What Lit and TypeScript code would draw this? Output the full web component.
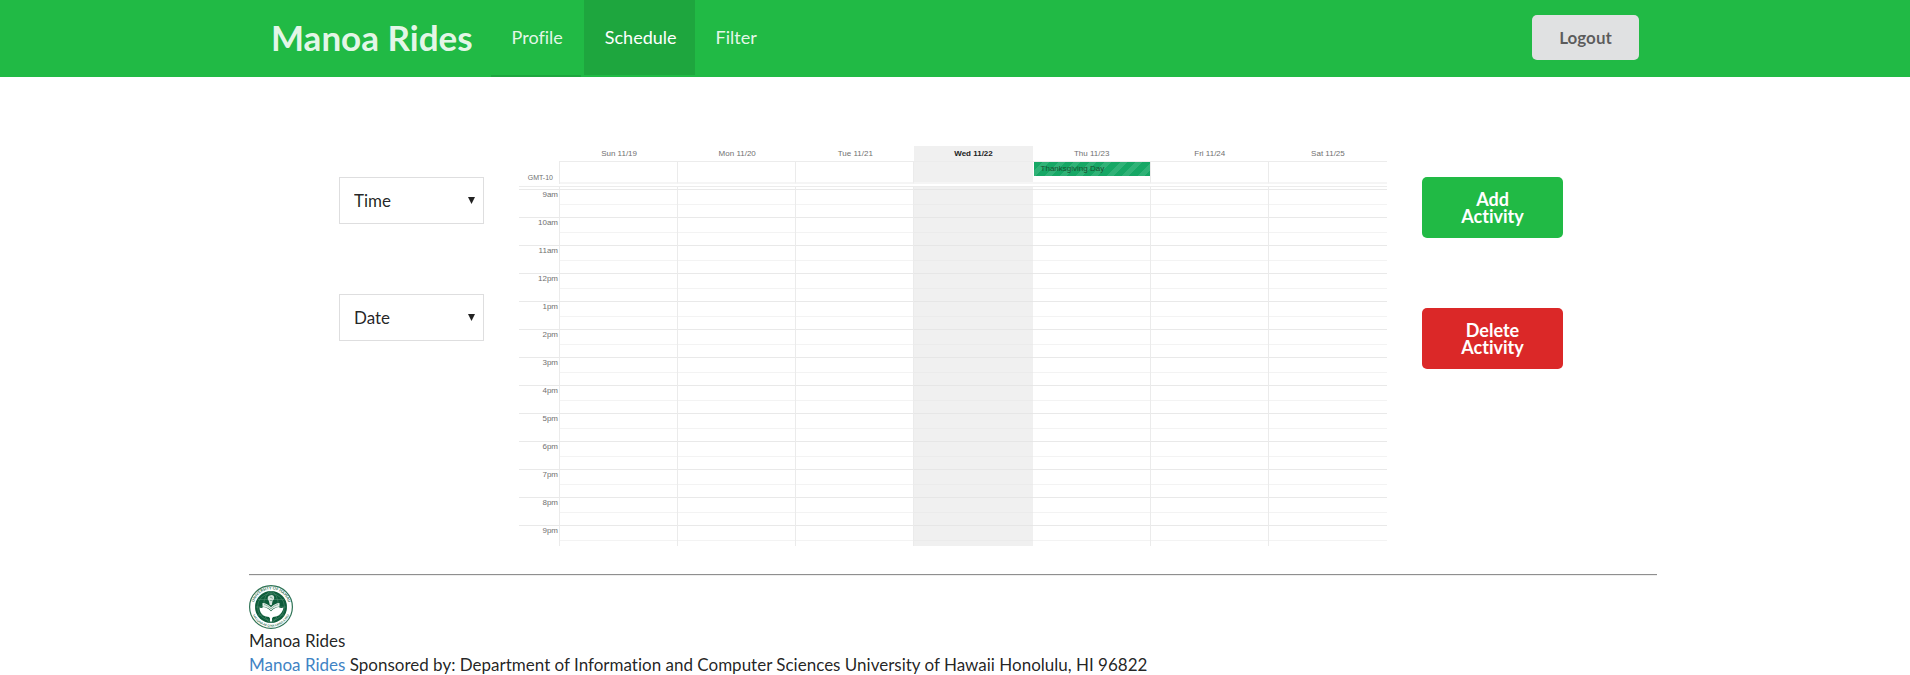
import { LitElement, html, css, svg } from "lit";
import { customElement, property } from "lit/decorators.js";
import { classMap } from "lit/directives/class-map.js";

const DAYS = ["Sun 11/19", "Mon 11/20", "Tue 11/21", "Wed 11/22", "Thu 11/23", "Fri 11/24", "Sat 11/25"];
const HOURS = ["9am", "10am", "11am", "12pm", "1pm", "2pm", "3pm", "4pm", "5pm", "6pm", "7pm", "8pm", "9pm"];
const TODAY = 3;
const HOLIDAY = 4;

@customElement("week-calendar")
class WeekCalendar extends LitElement {
  static styles = css`
    :host {
      display: block;
      font-family: "Liberation Sans", Arial, sans-serif;
      font-size: 8px;
      line-height: 10px;
      color: #707070;
    }
    table {
      width: 100%;
      table-layout: fixed;
      border-collapse: separate;
      border-spacing: 0;
    }
    th,
    td {
      box-sizing: border-box;
      padding: 0;
      font-weight: normal;
    }
    .gutter {
      width: 41px;
    }
    .days th {
      height: 15px;
      padding-top: 1px;
    }
    .today {
      background-color: #f0f0f0;
    }
    .days .today {
      color: #222;
      font-weight: bold;
    }
    .allday > * {
      height: 23px;
      border-bottom: 2px solid #f5f5f5;
      vertical-align: top;
    }
    .allday td {
      border-top: 1px solid #ececec;
    }
    .allday .zone {
      padding: 0 6px 1px 0;
      border-bottom: 0;
      font-size: 7px;
      text-align: right;
      vertical-align: bottom;
    }
    .line {
      border-right: 1px solid #ebebeb;
    }
    .space td {
      height: 2px;
    }
    .strip td {
      height: 3px;
      border-top: 1px solid #ececec;
    }
    .hour > * {
      height: 28px;
      border-top: 1px solid #e9e9e9;
      vertical-align: top;
    }
    .hour td {
      background-image: linear-gradient(#f3f3f3, #f3f3f3);
      background-size: 100% 1px;
      background-position: 0 14px;
      background-repeat: no-repeat;
    }
    .hour .today {
      background-image: linear-gradient(#ebebeb, #ebebeb);
      border-top-color: #e6e6e6;
    }
    .hour th {
      padding: 0 1px 0 0;
      text-align: right;
    }
    .hour:last-child > * {
      height: 21px;
    }
    .event {
      height: 14px;
      margin-left: 1px;
      padding-left: 7px;
      box-sizing: border-box;
      line-height: 14px;
      color: #17502f;
      background: repeating-linear-gradient(135deg, #16a765 0 6px, #30b277 6px 11px);
    }
  `;

  private cellClass(i: number) {
    return classMap({ today: i === TODAY, line: i !== TODAY && i !== DAYS.length - 1 });
  }

  render() {
    return html`
      <table aria-label="Week schedule">
        <thead>
          <tr class="days">
            <td class="gutter"></td>
            ${DAYS.map((d, i) => html`<th scope="col" class=${classMap({ today: i === TODAY })}>${d}</th>`)}
          </tr>
        </thead>
        <tbody>
          <tr class="allday">
            <th scope="row" class="zone line">GMT-10</th>
            ${DAYS.map(
              (_, i) => html`<td class=${this.cellClass(i)}>
                ${i === HOLIDAY ? html`<div class="event">Thanksgiving Day</div>` : ""}
              </td>`
            )}
          </tr>
          <tr class="space"><td colspan="8"></td></tr>
          <tr class="strip">
            <td class="line"></td>
            ${DAYS.map((_, i) => html`<td class=${this.cellClass(i)}></td>`)}
          </tr>
          ${HOURS.map(
            (h) => html`<tr class="hour">
              <th scope="row" class="line">${h}</th>
              ${DAYS.map((_, i) => html`<td class=${this.cellClass(i)}></td>`)}
            </tr>`
          )}
        </tbody>
      </table>
    `;
  }
}

@customElement("drop-down")
class DropDown extends LitElement {
  @property() label = "";
  @property({ type: Array }) options: string[] = [];

  static styles = css`
    :host {
      display: grid;
      align-items: center;
    }
    select,
    svg {
      grid-area: 1 / 1;
    }
    select {
      appearance: none;
      width: 100%;
      height: 47px;
      padding: 0 32px 0 14px;
      border: 1px solid #dededf;
      border-radius: 0;
      background: #fff;
      color: rgba(0, 0, 0, 0.87);
      font: inherit;
    }
    svg {
      justify-self: end;
      width: 7px;
      height: 7px;
      margin-right: 9px;
      pointer-events: none;
    }
  `;

  render() {
    return html`
      <select aria-label=${this.label}>
        <option selected>${this.label}</option>
        ${this.options.map((o) => html`<option>${o}</option>`)}
      </select>
      <svg viewBox="0 0 7 7" aria-hidden="true"><path d="M0 0h7L3.500 7z" fill="#222" /></svg>
    `;
  }
}

const seal = svg`
  <defs>
    <path id="upper" d="M4.400 22a17.600 17.600 0 0 1 35.200 0" />
    <path id="lower" d="M2.200 22a19.800 19.800 0 0 0 39.600 0" />
  </defs>
  <circle cx="22" cy="22" r="21.4" fill="#fff" stroke="#2e7355" stroke-width="1.200" />
  <circle cx="22" cy="22" r="16" fill="#0d5c3a" />
  <g fill="none" stroke="#4f8b70" stroke-width=".6">
    <circle cx="22" cy="22" r="13.500" />
    <ellipse cx="22" cy="22" rx="7.500" ry="15.500" />
    <path d="M22 6v32M6 22h32M9 14.500h26M9 30h26" />
  </g>
  <path d="M10.500 22.500c1.500.8 3.500.4 5.500 1 2.500.6 4.500 1.800 6 3.500 1.500-1.700 3.500-2.900 6-3.500 2-.6 4-.2 6.500-1-.5 3.500-2.500 6.500-5 8-1.500 1-3.500 1.200-5.500 1.500l-1 1.500v3h-2v-3l-1-1.500c-2-.3-4-.5-5.500-1.500-2.500-1.500-4-4.500-4-8z" fill="#fff" />
  <path d="M13.500 18c3 0 6 1.500 8.500 4.500 2.500-3 5.500-4.500 8.500-4.500v3.500c-3.500.3-6 1.500-8.500 4-2.500-2.500-5-3.700-8.500-4z" fill="#e3eee8" />
  <path d="M13.500 22c3.500 0 6 1.500 8.500 4.500 2.500-3 5-4.500 8.500-4.500v4c-3 0-5.500.8-8.500 2.500-3-1.700-5.500-2.500-8.500-2.500z" fill="#fff" />
  <path d="M15 19.500c2.500.5 5 2 7 4.500 2-2.500 4.500-4 7-4.500" fill="none" stroke="#6b9f87" stroke-width=".7" />
  <path d="M20.800 20l-1-4.200c-1.800-1.800-1.300-4.500 1-5.200 2-1.500 4.600-.3 4.400 2.400-.1 1.800-1.300 2.300-1.700 3.300l-.7 3.700z" fill="#d5e4dd" />
  <path d="M21 12.500c1.200-.8 2.500 0 2.200 1.200M20.800 15.500h2.700" fill="none" stroke="#4f8b70" stroke-width=".7" />
  <g class="seal-text">
    <text><textPath href="#upper" startOffset="50%" text-anchor="middle">UNIVERSITY OF HAWAII</textPath></text>
    <text class="motto"><textPath href="#lower" startOffset="50%" text-anchor="middle">MA LUNA AE O NA LAHUI A PAU</textPath></text>
  </g>
`;

@customElement("app-root")
class AppRoot extends LitElement {
  static styles = css`
    :host {
      display: block;
      font-family: Lato, "Helvetica Neue", Arial, sans-serif;
      font-size: 17px;
      font-variant-ligatures: no-common-ligatures;
      line-height: 24px;
      color: rgba(0, 0, 0, 0.87);
    }
    .bar {
      padding-right: 4px;
      background: #21ba45;
    }
    .container {
      box-sizing: border-box;
      max-width: 1408px;
      margin: 0 auto;
    }
    .nav {
      display: flex;
      align-items: stretch;
      height: 77px;
      padding: 0 18px 0 22px;
    }
    .brand,
    .item {
      display: flex;
      align-items: center;
      color: rgba(255, 255, 255, 0.9);
      text-decoration: none;
      white-space: nowrap;
    }
    .brand {
      margin-right: 18px;
      padding-bottom: 3px;
      font-size: 35px;
      font-weight: bold;
    }
    .item {
      box-sizing: border-box;
      padding: 0 18px 1px 21px;
      margin-right: 3px;
      border-bottom: 2px solid transparent;
      font-size: 18px;
    }
    .underlined {
      border-bottom-color: #1ea63e;
    }
    .active {
      margin-right: 0;
      background: #1ea63e;
      background-clip: padding-box;
      color: #fff;
    }
    button {
      border: 0;
      border-radius: 5px;
      font: inherit;
      font-weight: bold;
      cursor: pointer;
    }
    .logout {
      align-self: center;
      width: 107px;
      height: 45px;
      margin-left: auto;
      margin-bottom: 2px;
      background: #e0e1e2;
      color: rgba(0, 0, 0, 0.6);
    }
    .page {
      padding-right: 4px;
    }
    .board {
      display: flex;
      align-items: flex-start;
      gap: 35px;
      padding: 69px 94px 28px 90px;
    }
    .side {
      display: flex;
      flex: none;
      flex-direction: column;
      padding-top: 31px;
    }
    .filters {
      width: 145px;
      gap: 70px;
    }
    .actions {
      width: 141px;
      gap: 70px;
    }
    .calendar {
      flex: 1;
      min-width: 0;
    }
    .action {
      height: 61px;
      padding: 0 26px;
      color: #fff;
      font-size: 18px;
      line-height: 17px;
    }
    .add {
      background: #21ba45;
    }
    .delete {
      background: #db2828;
    }
    hr {
      margin: 0 0 9px;
      border: 0;
      border-top: 1px solid #8f8f8f;
      border-bottom: 1px solid #eee;
    }
    .seal {
      display: block;
      width: 44px;
      height: 44px;
    }
    .seal-text {
      fill: #2e7355;
      font-size: 4px;
      font-weight: bold;
    }
    .motto {
      font-size: 3px;
    }
    p {
      margin: 0;
    }
    p a {
      color: #4183c4;
      text-decoration: none;
    }
  `;

  render() {
    return html`
      <header class="bar">
        <nav class="container nav">
          <a class="brand" href="#">Manoa Rides</a>
          <a class="item underlined" href="#profile">Profile</a>
          <a class="item active" href="#schedule" aria-current="page">Schedule</a>
          <a class="item" href="#filter">Filter</a>
          <button class="logout" type="button">Logout</button>
        </nav>
      </header>
      <div class="page">
        <main class="container board">
          <div class="side filters">
            <drop-down label="Time" .options=${HOURS}></drop-down>
            <drop-down label="Date" .options=${DAYS}></drop-down>
          </div>
          <week-calendar class="calendar"></week-calendar>
          <div class="side actions">
            <button class="action add" type="button">Add Activity</button>
            <button class="action delete" type="button">Delete Activity</button>
          </div>
        </main>
        <footer class="container">
          <hr />
          <svg class="seal" viewBox="0 0 44 44" role="img" aria-label="University of Hawaii seal">${seal}</svg>
          <p>Manoa Rides</p>
          <p>
            <a href="#">Manoa Rides</a> Sponsored by: Department of Information and Computer Sciences University of
            Hawaii Honolulu, HI 96822
          </p>
        </footer>
      </div>
    `;
  }
}
